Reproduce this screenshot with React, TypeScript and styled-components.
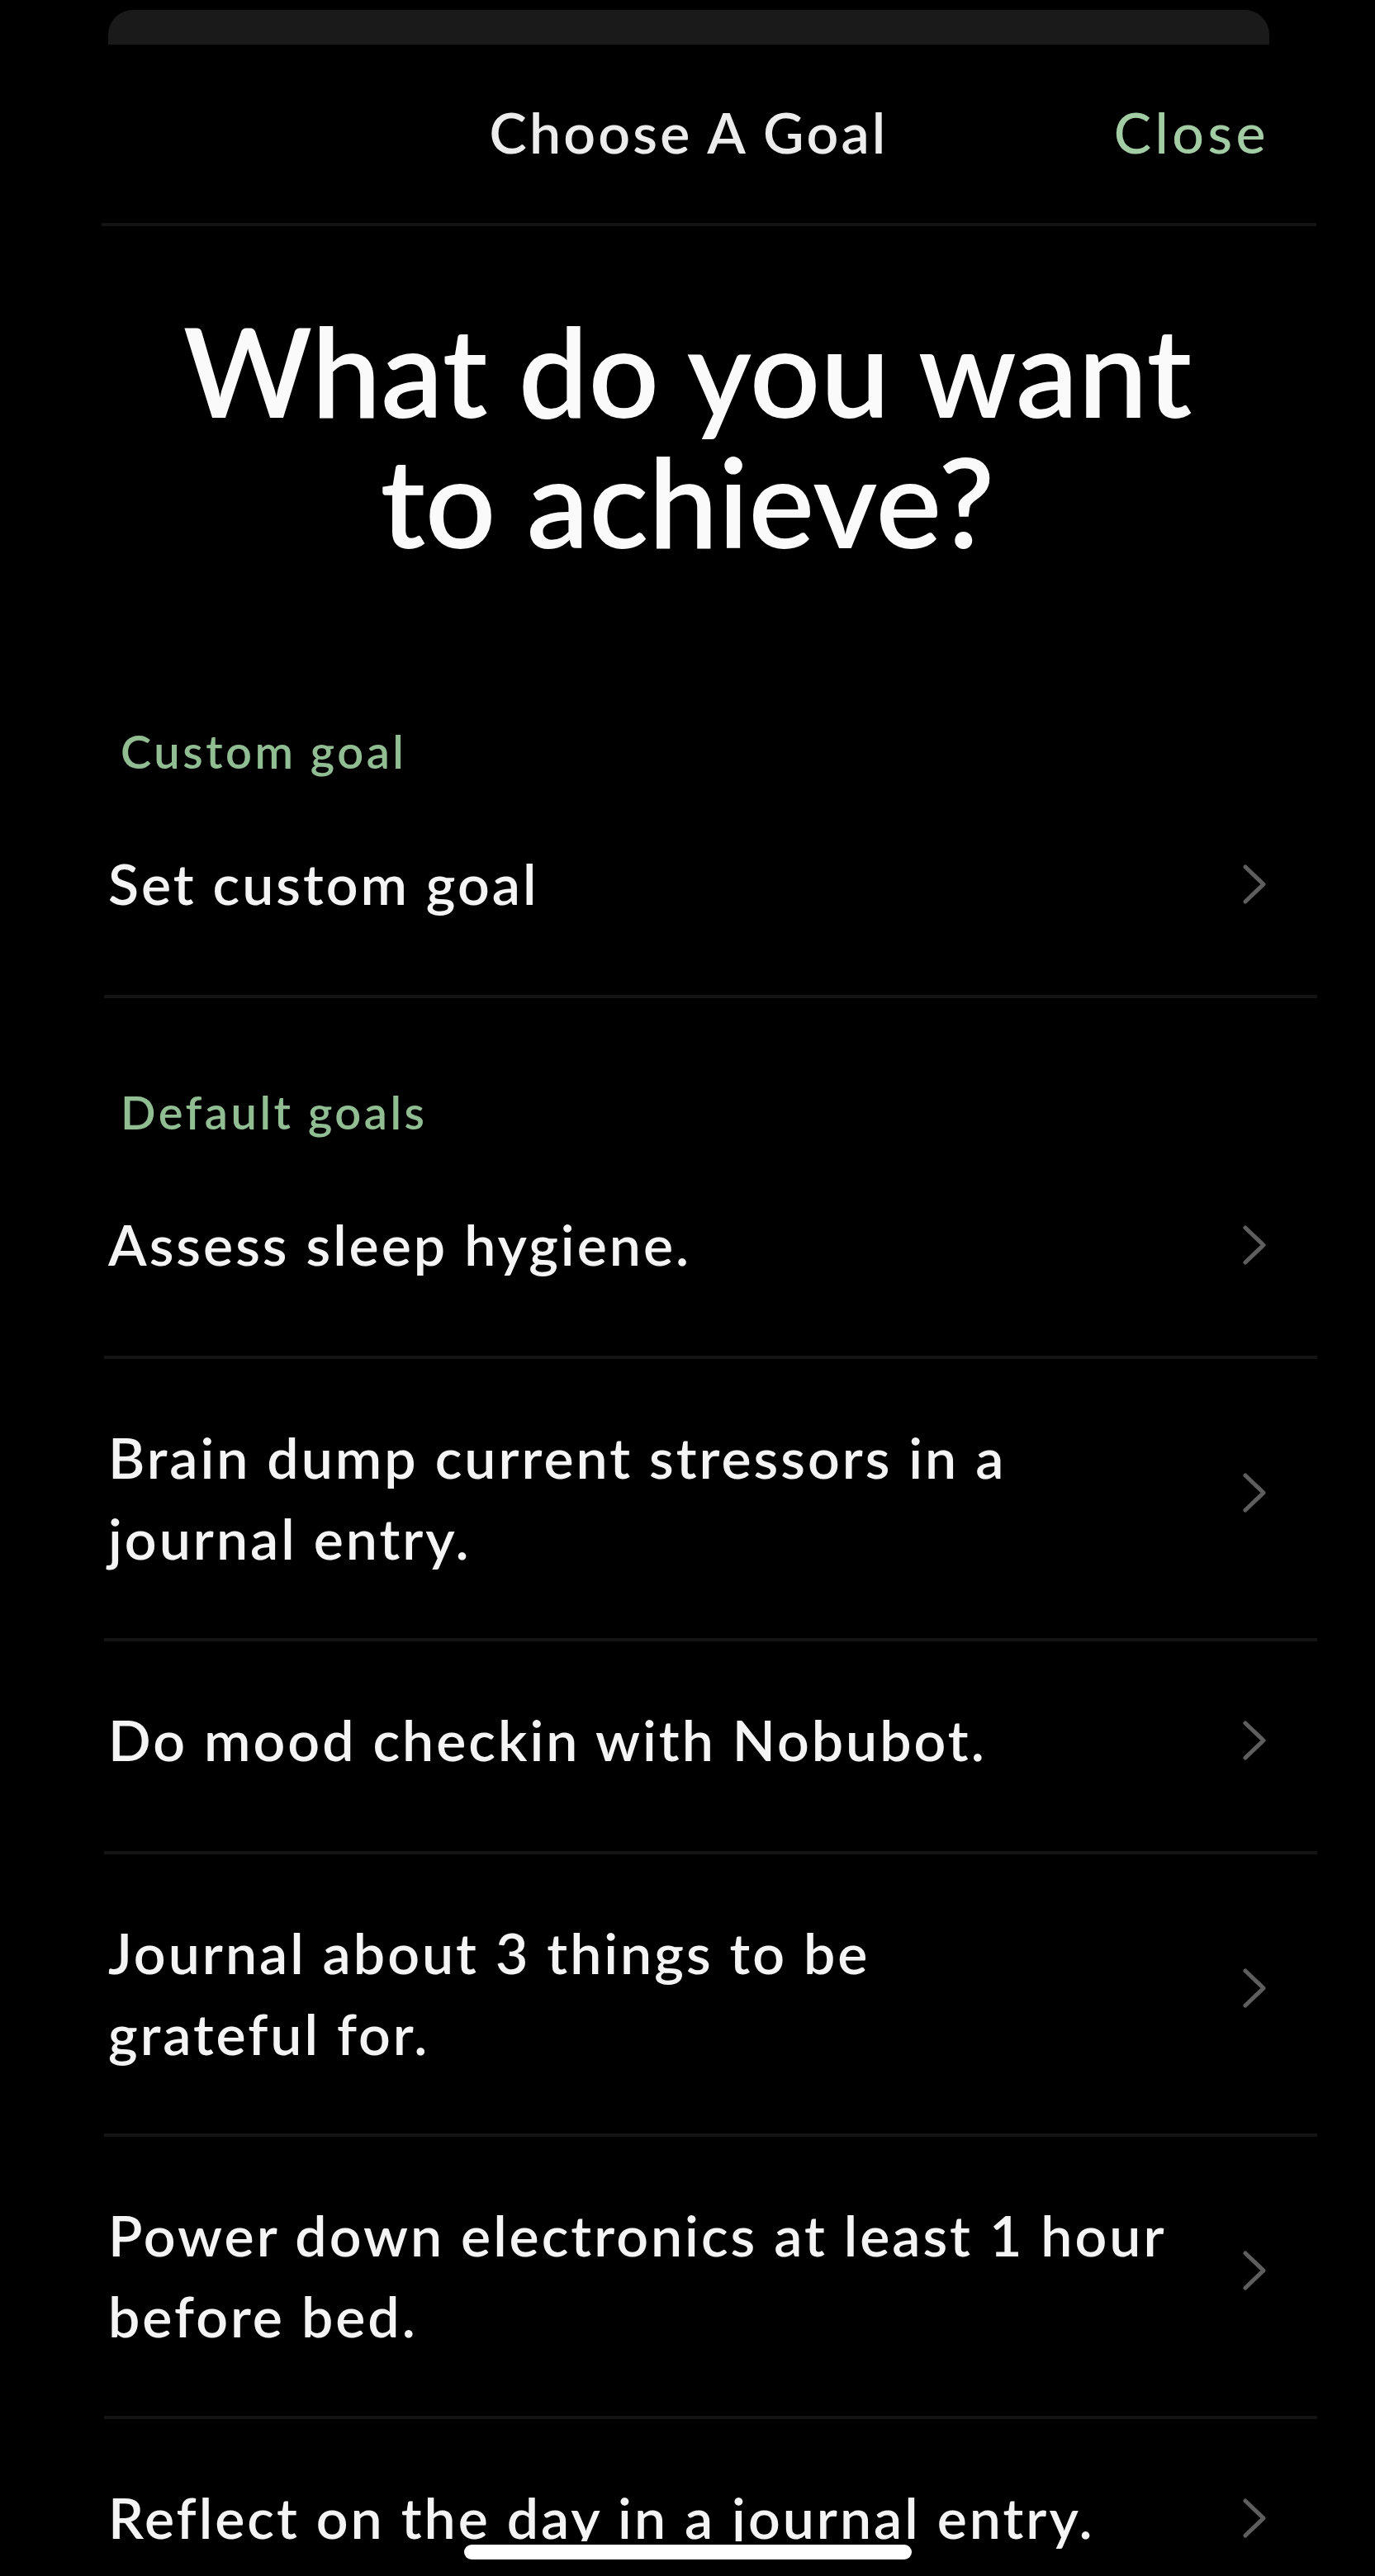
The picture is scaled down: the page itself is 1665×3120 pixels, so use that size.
import React from 'react';
import styled, { createGlobalStyle } from 'styled-components';

const GlobalStyle = createGlobalStyle`
  html, body {
    margin: 0;
    padding: 0;
    background: #000;
    overflow: hidden;
  }
  body {
    font-family: Lato, 'Open Sans', 'Liberation Sans', sans-serif;
    color: #f4f4f4;
    -webkit-font-smoothing: antialiased;
  }
`;

const Screen = styled.div`
  position: relative;
  width: 1665px;
  height: 3120px;
  overflow: hidden;
  background: #000;
`;

const SheetEdge = styled.div`
  margin: 12px 128px 0 131px;
  height: 42px;
  background: #1a1a1a;
  border-radius: 30px 30px 0 0;
`;

const NavBar = styled.header`
  display: grid;
  grid-template-columns: 1fr auto 1fr;
  align-items: center;
  margin: 0 128px 0 131px;
  padding: 65px 0 69px;
  line-height: 82px;
`;

const NavTitle = styled.h1`
  grid-column: 2;
  margin: 0;
  font-size: 68px;
  font-weight: 600;
  letter-spacing: 3.2px;
  color: #ececec;
  white-space: nowrap;
`;

const CloseButton = styled.button`
  justify-self: end;
  padding: 0;
  border: 0;
  background: none;
  font: inherit;
  font-size: 68px;
  font-weight: 500;
  letter-spacing: 4.5px;
  line-height: 82px;
  color: #a2cca4;
  cursor: pointer;
`;

const Divider = styled.div`
  height: 4px;
  margin: 0 71px 0 123px;
  background: #141414;
`;

const Headline = styled.h2`
  margin: 95px 0 87px;
  text-align: center;
  font-size: 150px;
  font-weight: 600;
  line-height: 158px;
  color: #fafafa;
`;

const List = styled.div`
  margin-left: 126px;
  width: 1469px;
`;

const SectionLabel = styled.div`
  padding: 106px 0 9px 20px;
  font-size: 56px;
  font-weight: 600;
  letter-spacing: 3.5px;
  line-height: 64px;
  color: #90bd92;
`;

const Row = styled.div`
  box-sizing: border-box;
  display: flex;
  min-height: 258px;
  padding: 70px 60px 72px 5px;
  border-bottom: 4px solid #141414;
  cursor: pointer;
`;

const RowText = styled.div`
  flex: 1;
  align-self: flex-start;
  font-size: 68px;
  font-weight: 600;
  letter-spacing: 3px;
  line-height: 98px;
  color: #f4f4f4;
`;

const Line = styled.span`
  display: block;
  white-space: nowrap;
`;

const Chevron = styled.svg`
  flex: none;
  align-self: center;
  width: 32px;
  height: 52px;
  margin-top: -12px;
`;

const HomeIndicator = styled.div`
  position: absolute;
  left: 50%;
  bottom: 20px;
  width: 542px;
  height: 18px;
  margin-left: -271px;
  border-radius: 9px;
  background: #fff;
  box-shadow: 0 0 0 4px #000;
`;

const ChevronIcon = () => (
  <Chevron viewBox="0 0 32 52" fill="none">
    <path
      d="M5 5 L27 26 L5 47"
      stroke="#5e5e5e"
      strokeWidth="5"
      strokeLinecap="round"
      strokeLinejoin="round"
    />
  </Chevron>
);

const GoalRow = ({ lines }: { lines: string[] }) => (
  <Row>
    <RowText>
      {lines.map((l) => (
        <Line key={l}>{l}</Line>
      ))}
    </RowText>
    <ChevronIcon />
  </Row>
);

const defaultGoals: string[][] = [
  ['Assess sleep hygiene.'],
  ['Brain dump current stressors in a', 'journal entry.'],
  ['Do mood checkin with Nobubot.'],
  ['Journal about 3 things to be', 'grateful for.'],
  ['Power down electronics at least 1 hour', 'before bed.'],
  ['Reflect on the day in a journal entry.'],
];

export default function App() {
  return (
    <Screen>
      <GlobalStyle />
      <SheetEdge />
      <NavBar>
        <NavTitle>Choose A Goal</NavTitle>
        <CloseButton>Close</CloseButton>
      </NavBar>
      <Divider />
      <Headline>
        What do you want
        <br />
        to achieve?
      </Headline>
      <List>
        <SectionLabel>Custom goal</SectionLabel>
        <GoalRow lines={['Set custom goal']} />
        <SectionLabel>Default goals</SectionLabel>
        {defaultGoals.map((g) => (
          <GoalRow key={g[0]} lines={g} />
        ))}
      </List>
      <HomeIndicator />
    </Screen>
  );
}
